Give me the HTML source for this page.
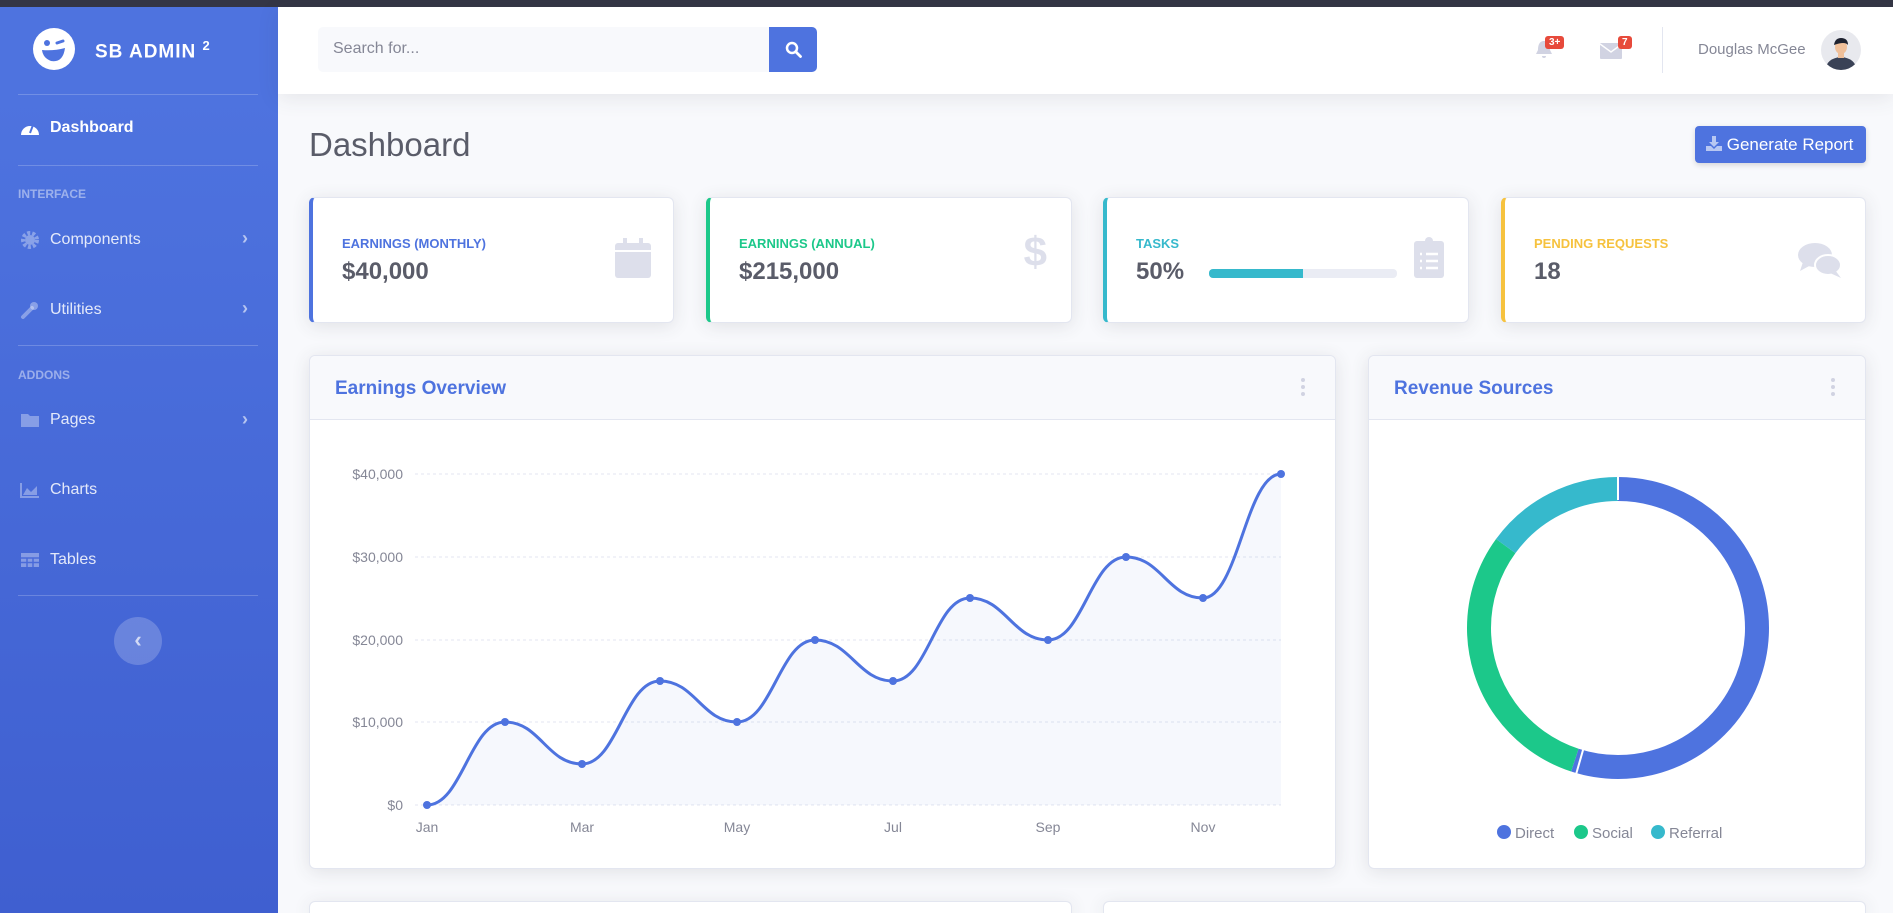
<!DOCTYPE html>
<html style="overflow:hidden;width:1893px;height:913px"><head><meta charset="utf-8"><style>
*{box-sizing:border-box;margin:0;padding:0}
body{width:1893px;height:913px;overflow:hidden;background:#f8f9fc;font-family:"Liberation Sans",sans-serif;position:relative;color:#858796}
.abs{position:absolute}
#top{left:0;top:0;width:1893px;height:7px;background:#343645}
#side{left:0;top:7px;width:278px;height:906px;background:linear-gradient(180deg,#4e73df 10%,#3f5fd0 100%)}
.hr{position:absolute;left:18px;width:240px;height:1px;background:rgba(255,255,255,.2)}
.nav{position:absolute;left:20px;color:rgba(255,255,255,.85);font-size:16px;display:flex;align-items:center}
.nav svg{margin-right:10px}
.head{position:absolute;left:18px;color:rgba(255,255,255,.45);font-size:12px;font-weight:bold}
.chev{position:absolute;left:242px;color:rgba(255,255,255,.6);font-size:18px;font-weight:bold}
#bar{left:278px;top:7px;width:1615px;height:87px;background:#fff;box-shadow:0 4px 20px rgba(58,59,69,.1)}
.card{position:absolute;background:#fff;border-radius:6px;box-shadow:0 3px 18px rgba(58,59,69,.12);border:1px solid #e3e6f0}
.lab{position:absolute;left:29px;top:38px;font-size:13px;font-weight:bold}
.val{position:absolute;left:29px;top:60px;font-size:24px;font-weight:bold;color:#5a5c69}
.ch{position:absolute;left:0;top:0;right:0;height:64px;background:#f8f9fc;border-bottom:1px solid #e3e6f0;border-radius:6px 6px 0 0}
.ch span{position:absolute;left:25px;top:22px;color:#4e73df;font-size:19px;font-weight:bold}
.dots{position:absolute;right:30px;top:22px;width:4px}
.dots i{display:block;width:4px;height:4px;border-radius:2px;background:#d1d3e2;margin-bottom:3px}
</style></head><body>
<div id="top" class="abs"></div>
<div id="side" class="abs">
 <svg class="abs" style="left:32px;top:20px" width="44" height="44" viewBox="0 0 44 44"><circle cx="22" cy="22" r="21" fill="#fff"/><circle cx="15" cy="16" r="3" fill="#4e73df"/><path d="M25 16 l6 -2" stroke="#4e73df" stroke-width="3" stroke-linecap="round"/><path d="M10 23 Q22 24 33 21 Q31 36 19 34 Q11 31 10 23Z" fill="#4e73df"/></svg>
 <div class="abs" style="left:95px;top:31px;color:#fff;font-size:19px;font-weight:bold;letter-spacing:1px">SB ADMIN <sup style="font-size:13px">2</sup></div>
 <div class="hr" style="top:87px"></div>
 <div class="nav" style="top:112px;color:#fff;font-weight:bold"><svg width="20" height="18" viewBox="0 0 20 18"><path d="M1 16 A9 9 0 1 1 19 16Z" fill="#fff"/><path d="M10 14 L13 6" stroke="#4e73df" stroke-width="2"/></svg>Dashboard</div>
 <div class="hr" style="top:158px"></div>
 <div class="head" style="top:180px">INTERFACE</div>
 <div class="nav" style="top:223px"><svg width="20" height="20" viewBox="0 0 20 20"><circle cx="10" cy="10" r="7" fill="none" stroke="rgba(255,255,255,.35)" stroke-width="4" stroke-dasharray="3 2"/><circle cx="10" cy="10" r="5" fill="rgba(255,255,255,.35)"/></svg>Components</div><div class="chev" style="top:221px">›</div>
 <div class="nav" style="top:293px"><svg width="20" height="20" viewBox="0 0 20 20"><path d="M3 17 L12 8" stroke="rgba(255,255,255,.35)" stroke-width="4" stroke-linecap="round"/><circle cx="14" cy="6" r="4" fill="rgba(255,255,255,.35)"/></svg>Utilities</div><div class="chev" style="top:291px">›</div>
 <div class="hr" style="top:338px"></div>
 <div class="head" style="top:361px">ADDONS</div>
 <div class="nav" style="top:404px"><svg width="20" height="18" viewBox="0 0 20 18"><path d="M1 3h7l2 2h9v11H1Z" fill="rgba(255,255,255,.35)"/></svg>Pages</div><div class="chev" style="top:402px">›</div>
 <div class="nav" style="top:474px"><svg width="20" height="18" viewBox="0 0 20 18"><path d="M1 2v14h18" stroke="rgba(255,255,255,.35)" stroke-width="2" fill="none"/><path d="M3 14 L7 7 L11 11 L17 5 V14Z" fill="rgba(255,255,255,.35)"/></svg>Charts</div>
 <div class="nav" style="top:544px"><svg width="20" height="18" viewBox="0 0 20 18"><rect x="1" y="2" width="18" height="14" fill="rgba(255,255,255,.35)"/><path d="M1 7h18M1 11.5h18M7 7v9M13 7v9" stroke="#4a6bd9" stroke-width="1.5"/></svg>Tables</div>
 <div class="hr" style="top:588px"></div>
 <div class="abs" style="left:114px;top:610px;width:48px;height:48px;border-radius:50%;background:rgba(255,255,255,.2);color:rgba(255,255,255,.7);text-align:center;line-height:46px;font-size:22px;font-weight:bold">‹</div>
</div>
<div id="bar" class="abs"></div>
<div class="abs" style="left:318px;top:27px;width:451px;height:45px;background:#f8f9fc;border-radius:5px 0 0 5px;font-size:16px;color:#858796;padding:13px 15px">Search for...</div>
<div class="abs" style="left:769px;top:27px;width:48px;height:45px;background:#4e73df;border-radius:0 5px 5px 0"><svg style="margin:14px 16px" width="17" height="17" viewBox="0 0 17 17"><circle cx="7" cy="7" r="5" fill="none" stroke="#fff" stroke-width="2.5"/><path d="M11 11l4.5 4.5" stroke="#fff" stroke-width="2.8" stroke-linecap="round"/></svg></div>
<svg class="abs" style="left:1535px;top:40px" width="18" height="20" viewBox="0 0 18 20"><path d="M9 1 C4 1 3 6 3 10 L1 14 H17 L15 10 C15 6 14 1 9 1Z M7 16 a2 2 0 0 0 4 0Z" fill="#d1d3e2"/></svg>
<div class="abs" style="left:1545px;top:36px;background:#e74a3b;color:#fff;font-size:10px;font-weight:bold;padding:1px 4px;border-radius:3px">3+</div>
<svg class="abs" style="left:1600px;top:43px" width="22" height="16" viewBox="0 0 22 16"><rect width="22" height="16" rx="1" fill="#d1d3e2"/><path d="M0 1 L11 9 L22 1" stroke="#fff" stroke-width="1.5" fill="none"/></svg>
<div class="abs" style="left:1618px;top:36px;background:#e74a3b;color:#fff;font-size:10px;font-weight:bold;padding:1px 4px;border-radius:3px">7</div>
<div class="abs" style="left:1662px;top:27px;width:1px;height:46px;background:#e3e6f0"></div>
<div class="abs" style="left:1698px;top:41px;font-size:15px;color:#858796">Douglas McGee</div>
<svg class="abs" style="left:1821px;top:30px" width="40" height="40" viewBox="0 0 40 40"><clipPath id="av"><circle cx="20" cy="20" r="20"/></clipPath><g clip-path="url(#av)"><rect width="40" height="40" fill="#e8e9ee"/><path d="M4 40 Q6 28 20 27 Q34 28 36 40Z" fill="#3a4256"/><rect x="17" y="22" width="6" height="6" fill="#f0c09a"/><ellipse cx="20" cy="17" rx="6" ry="7" fill="#f0c09a"/><path d="M13 15 Q14 8 20 8 Q27 8 27 15 Q24 11 13 15Z" fill="#1e2230"/></g></svg>
<div class="abs" style="left:309px;top:126px;font-size:33px;color:#5a5c69">Dashboard</div>
<div class="abs" style="left:1695px;top:126px;width:171px;height:37px;background:#4e73df;border-radius:4px;color:#fff;font-size:17px;padding:9px 0 0 11px;box-shadow:0 2px 6px rgba(0,0,0,.15)"><svg width="16" height="15" viewBox="0 0 16 15" style="vertical-align:-1px"><path d="M6 0h4v6h3l-5 5-5-5h3Z M0 10h5l3 3 3-3h5v5H0Z" fill="rgba(255,255,255,.6)"/></svg> Generate Report</div>

<div class="card" style="left:309px;top:197px;width:365px;height:126px;border-left:4px solid #4e73df"><div class="lab" style="color:#4e73df">EARNINGS (MONTHLY)</div><div class="val">$40,000</div><svg class="abs" style="right:22px;top:40px" width="36" height="40" viewBox="0 0 36 40"><rect x="8" y="0" width="4" height="8" fill="#dddfeb"/><rect x="24" y="0" width="4" height="8" fill="#dddfeb"/><rect x="0" y="5" width="36" height="35" rx="3" fill="#dddfeb"/><rect x="0" y="12" width="36" height="2" fill="#fff"/></svg></div>
<div class="card" style="left:706px;top:197px;width:366px;height:126px;border-left:4px solid #1cc88a"><div class="lab" style="color:#1cc88a">EARNINGS (ANNUAL)</div><div class="val">$215,000</div><div class="abs" style="right:24px;top:30px;font-size:42px;font-weight:bold;color:#dddfeb">$</div></div>
<div class="card" style="left:1103px;top:197px;width:366px;height:126px;border-left:4px solid #36b9cc"><div class="lab" style="color:#36b9cc">TASKS</div><div class="val">50%</div><div class="abs" style="left:102px;top:71px;width:188px;height:9px;background:#eaecf4;border-radius:4px"><div style="width:94px;height:9px;background:#36b9cc;border-radius:4px 0 0 4px"></div></div><svg class="abs" style="right:24px;top:39px" width="30" height="41" viewBox="0 0 30 41"><rect x="0" y="4" width="30" height="37" rx="3" fill="#dddfeb"/><circle cx="15" cy="4" r="4" fill="#dddfeb"/><path d="M6 17h2M12 17h12M6 24h2M12 24h12M6 31h2M12 31h12" stroke="#fff" stroke-width="2.5"/></svg></div>
<div class="card" style="left:1501px;top:197px;width:365px;height:126px;border-left:4px solid #f6c23e"><div class="lab" style="color:#f6c23e">PENDING REQUESTS</div><div class="val">18</div><svg class="abs" style="right:22px;top:44px" width="46" height="38" viewBox="0 0 46 38"><ellipse cx="18" cy="13" rx="17" ry="12" fill="#dddfeb"/><path d="M6 20 L3 29 L14 23Z" fill="#dddfeb"/><ellipse cx="31" cy="23" rx="13" ry="10" fill="#dddfeb" stroke="#fff" stroke-width="2"/><path d="M38 28 L44 36 L33 31Z" fill="#dddfeb"/></svg></div>

<div class="card" style="left:309px;top:355px;width:1027px;height:514px"><div class="ch"><span>Earnings Overview</span><div class="dots"><i></i><i></i><i></i></div></div></div>
<div class="card" style="left:1368px;top:355px;width:498px;height:514px"><div class="ch"><span>Revenue Sources</span><div class="dots"><i></i><i></i><i></i></div></div></div>

<svg class="abs" style="left:0;top:0" width="1893" height="913">
 <g stroke="#e3e6f0" stroke-dasharray="3 3" stroke-width="1"><path d="M415 474H1281M415 557H1281M415 640H1281M415 722H1281M415 805H1281"/></g>
 <g font-family="Liberation Sans,sans-serif" font-size="14" fill="#858796" text-anchor="end"><text x="403" y="479">$40,000</text><text x="403" y="562">$30,000</text><text x="403" y="645">$20,000</text><text x="403" y="727">$10,000</text><text x="403" y="810">$0</text></g>
 <g font-family="Liberation Sans,sans-serif" font-size="14" fill="#858796" text-anchor="middle"><text x="427" y="832">Jan</text><text x="582" y="832">Mar</text><text x="737" y="832">May</text><text x="893" y="832">Jul</text><text x="1048" y="832">Sep</text><text x="1203" y="832">Nov</text></g>
 <path d="M427,805 C462,805 470,722 505,722 C540,722 547,764 582,764 C617,764 625,681 660,681 C695,681 702,722 737,722 C772,722 780,640 815,640 C850,640 858,681 893,681 C928,681 935,598 970,598 C1005,598 1013,640 1048,640 C1083,640 1091,557 1126,557 C1161,557 1168,598 1203,598 C1238,598 1246,474 1281,474 V805Z" fill="rgba(78,115,223,.05)"/>
 <path d="M427,805 C462,805 470,722 505,722 C540,722 547,764 582,764 C617,764 625,681 660,681 C695,681 702,722 737,722 C772,722 780,640 815,640 C850,640 858,681 893,681 C928,681 935,598 970,598 C1005,598 1013,640 1048,640 C1083,640 1091,557 1126,557 C1161,557 1168,598 1203,598 C1238,598 1246,474 1281,474" fill="none" stroke="#4e73df" stroke-width="3"/>
 <g fill="#4e73df"><circle cx="427" cy="805" r="4"/><circle cx="505" cy="722" r="4"/><circle cx="582" cy="764" r="4"/><circle cx="660" cy="681" r="4"/><circle cx="737" cy="722" r="4"/><circle cx="815" cy="640" r="4"/><circle cx="893" cy="681" r="4"/><circle cx="970" cy="598" r="4"/><circle cx="1048" cy="640" r="4"/><circle cx="1126" cy="557" r="4"/><circle cx="1203" cy="598" r="4"/><circle cx="1281" cy="474" r="4"/></g>
 <g transform="rotate(-90 1618 628)" fill="none" stroke-width="24">
  <circle cx="1618" cy="628" r="139" stroke="#4e73df" stroke-dasharray="480.4 873.4"/>
  <circle cx="1618" cy="628" r="139" stroke="#1cc88a" stroke-dasharray="262 873.4" stroke-dashoffset="-480.4"/>
  <circle cx="1618" cy="628" r="139" stroke="#36b9cc" stroke-dasharray="131 873.4" stroke-dashoffset="-742.4"/>
 </g>
 <g stroke="#fff" stroke-width="2"><path d="M1618 476V500"/><path d="M1618 628 L1575 778"/></g>
 <circle cx="1618" cy="628" r="126" fill="#fff"/>
 <g font-family="Liberation Sans,sans-serif" font-size="15" fill="#858796"><circle cx="1504" cy="832" r="7" fill="#4e73df"/><text x="1515" y="838">Direct</text><circle cx="1581" cy="832" r="7" fill="#1cc88a"/><text x="1592" y="838">Social</text><circle cx="1658" cy="832" r="7" fill="#36b9cc"/><text x="1669" y="838">Referral</text></g>
</svg>
<div class="card" style="left:309px;top:901px;width:763px;height:12px;border-bottom:none;border-radius:6px 6px 0 0"></div>
<div class="card" style="left:1103px;top:901px;width:763px;height:12px;border-bottom:none;border-radius:6px 6px 0 0"></div>
</body></html>
